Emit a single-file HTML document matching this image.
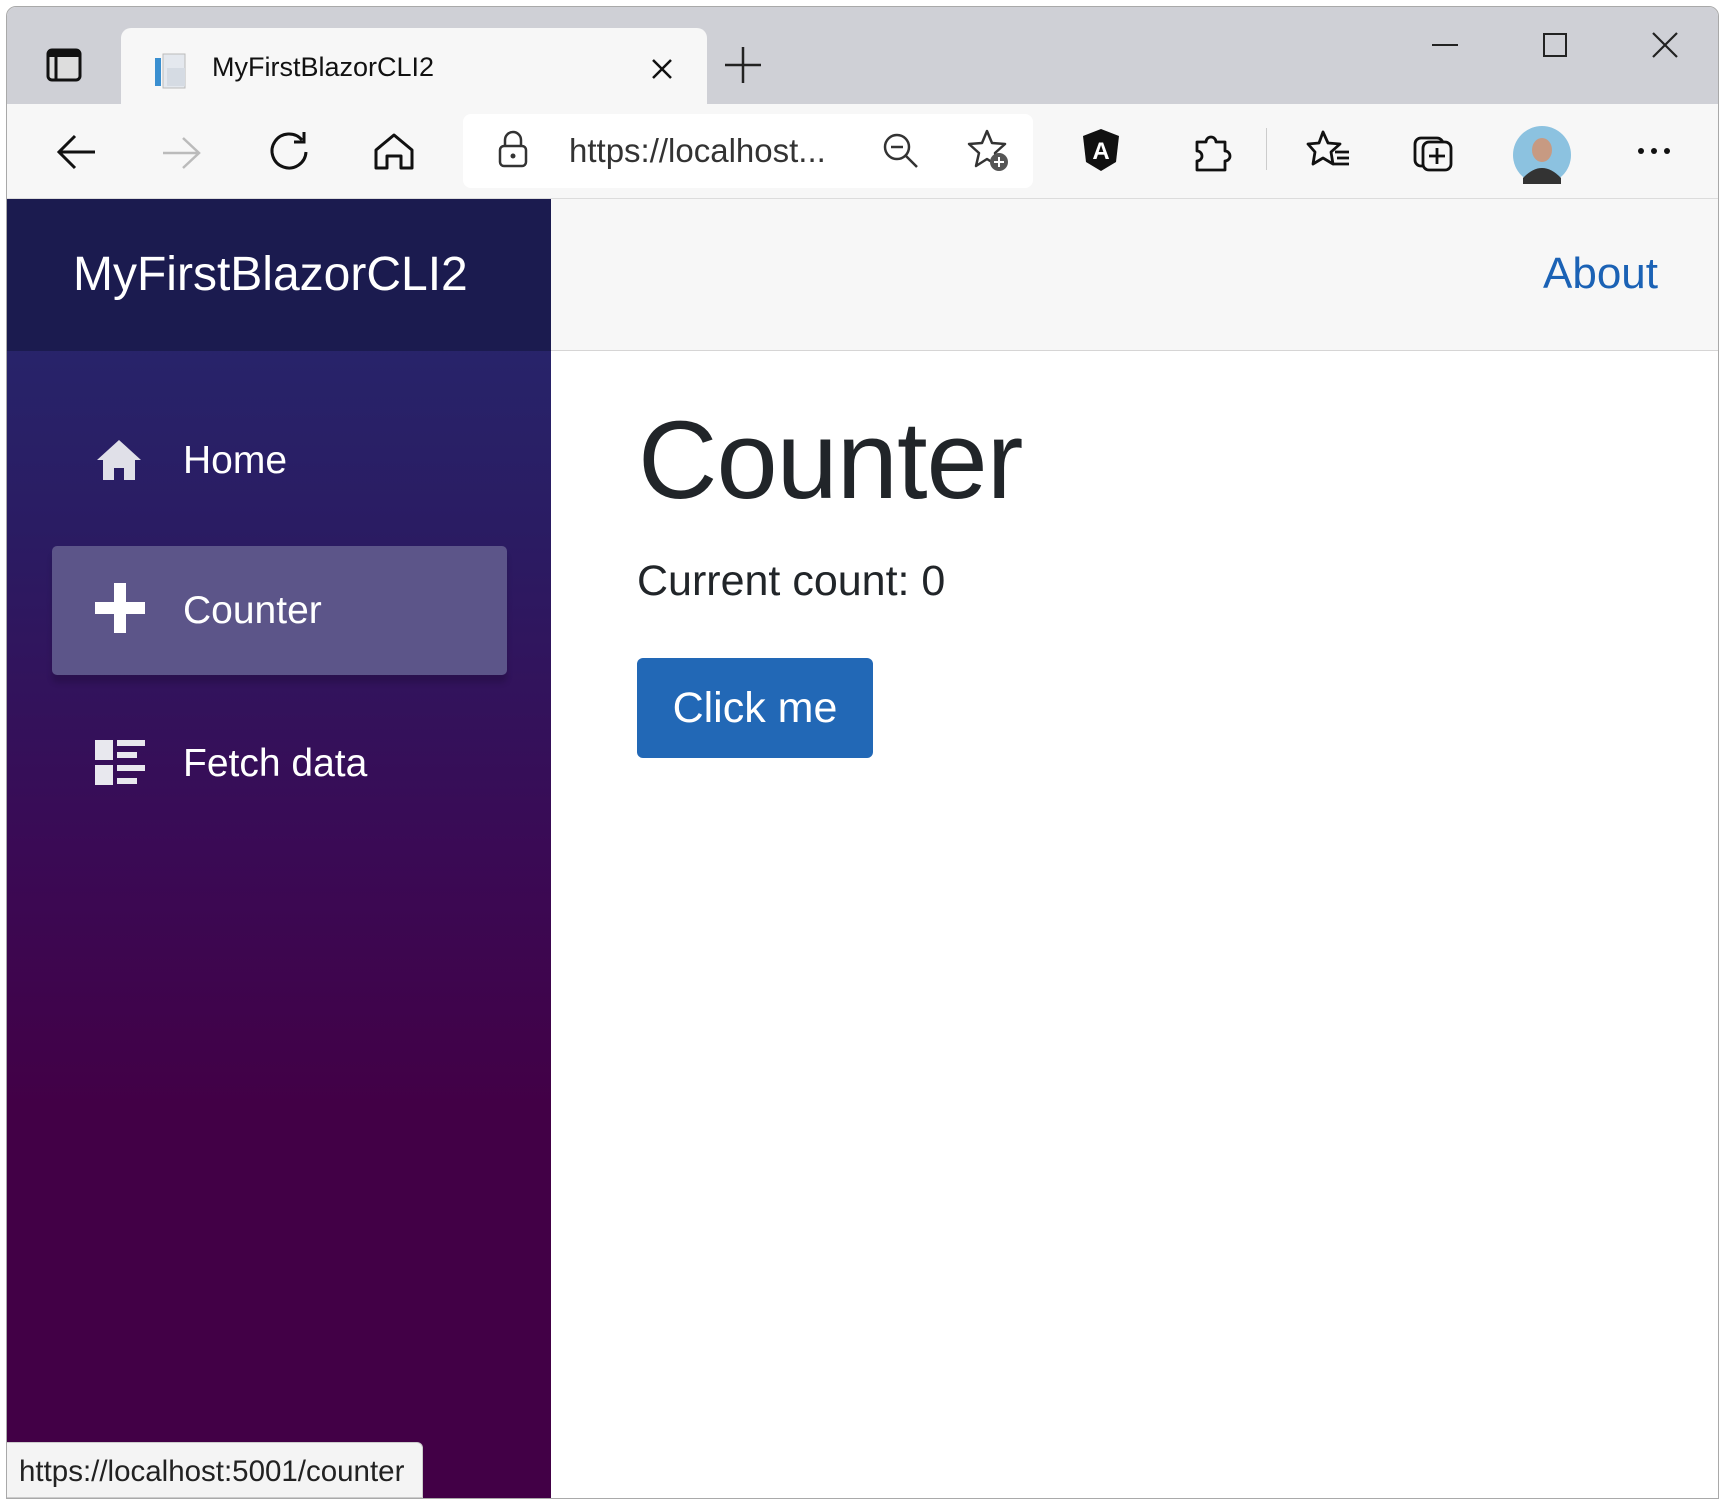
<!DOCTYPE html>
<html><head><meta charset="utf-8"><style>
*{margin:0;padding:0;box-sizing:border-box}
body{width:1725px;height:1505px;background:#fff;position:relative;overflow:hidden;font-family:"Liberation Sans",Arial,sans-serif}
.win{position:absolute;left:6px;top:6px;width:1713px;height:1493px;border:1px solid #a9a9a9;border-radius:10px 10px 0 0;overflow:hidden;background:#fff}
.tabbar{position:absolute;left:0;top:0;width:100%;height:97px;background:#cfd0d6}
.tab{position:absolute;left:114px;top:21px;width:586px;height:80px;background:#f7f7f7;border-radius:10px 10px 0 0}
.toolbar{position:absolute;left:0;top:97px;width:100%;height:95px;background:#f7f7f7;border-bottom:1px solid #dcdcdc}
.addr{position:absolute;left:456px;top:10px;width:570px;height:74px;background:#fff;border-radius:8px}
svg{position:absolute;overflow:visible}
.side{position:absolute;left:0;top:192px;width:544px;height:1301px;background:linear-gradient(180deg,#262a70 0%,#2a1c63 25%,#3a0a55 50%,#420046 70%,#420046 100%)}
.brandbar{position:absolute;left:0;top:0;width:544px;height:152px;background:#1b1b4f}
.brand{position:absolute;left:66px;top:48px;font-size:48px;color:#fff}
.nav{position:absolute;left:176px;font-size:39px;color:#fff}
.active{position:absolute;left:45px;top:347px;width:455px;height:129px;background:#5c5589;border-radius:5px;box-shadow:0 8px 6px rgba(0,0,0,.15)}
.top{position:absolute;left:544px;top:192px;width:1169px;height:152px;background:#f7f7f7;border-bottom:1px solid #d6d5d5}
.about{position:absolute;right:62px;top:50px;font-size:44px;color:#1b62b5}
h1{position:absolute;left:638px;top:397px;font-size:110px;font-weight:normal;color:#212529;letter-spacing:-1px}
.cc{position:absolute;left:637px;top:557px;font-size:43px;color:#212529}
.btn{position:absolute;left:637px;top:658px;width:236px;height:100px;background:#2268b6;border-radius:6px;color:#fff;font-size:43px;text-align:center;line-height:100px}
.status{position:absolute;left:0;top:1442px;width:416px;height:56px;background:#f4f4f4;border:1px solid #ccc;border-left:0;border-radius:0 6px 0 0;font-size:29.5px;color:#222;padding:12px 0 0 12px}
</style></head><body>
<div class="win">
 <div class="tabbar">
  <svg style="left:40px;top:42px" width="34" height="34"><rect x="1" y="1" width="32" height="30" rx="4" fill="#ddd" stroke="#111" stroke-width="3"/><rect x="1" y="1" width="32" height="7" fill="#111"/><line x1="9" y1="6" x2="9" y2="31" stroke="#111" stroke-width="3"/></svg>
  <div class="tab">
   <svg style="left:32px;top:24px" width="38" height="38"><rect x="2" y="6" width="6" height="28" fill="#3a8fd0"/><rect x="10" y="2" width="22" height="34" fill="#e4e8ee" stroke="#bbb"/><rect x="14" y="16" width="18" height="18" fill="#d5dbe3"/></svg>
   <div style="position:absolute;left:91px;top:24px;font-size:27px;color:#111">MyFirstBlazorCLI2</div>
   <svg style="left:530px;top:30px" width="22" height="22"><path d="M2 2L20 20M20 2L2 20" stroke="#111" stroke-width="2.5"/></svg>
  </div>
  <svg style="left:718px;top:40px" width="36" height="36"><path d="M18 0V36M0 18H36" stroke="#222" stroke-width="2.5"/></svg>
  <svg style="left:1425px;top:36px" width="26" height="4"><path d="M0 2H26" stroke="#222" stroke-width="2"/></svg>
  <svg style="left:1536px;top:26px" width="24" height="24"><rect x="1" y="1" width="22" height="22" fill="none" stroke="#222" stroke-width="2"/></svg>
  <svg style="left:1645px;top:25px" width="26" height="26"><path d="M1 1L25 25M25 1L1 25" stroke="#222" stroke-width="2.2"/></svg>
 </div>
 <div class="toolbar">
  <svg style="left:50px;top:30px" width="40" height="36"><path d="M38 18H3M18 2L2 18L18 34" fill="none" stroke="#111" stroke-width="3"/></svg>
  <svg style="left:156px;top:32px" width="40" height="34"><path d="M0 17H36M20 2L36 17L20 32" fill="none" stroke="#bbb" stroke-width="2.5"/></svg>
  <svg style="left:261px;top:26px" width="42" height="42"><path d="M34 10A17 17 0 1 0 38 22" fill="none" stroke="#111" stroke-width="3"/><path d="M36 2V12H26" fill="none" stroke="#111" stroke-width="3"/></svg>
  <svg style="left:366px;top:28px" width="42" height="40"><path d="M3 18L21 3L39 18V36H28V24H14V36H3Z" fill="none" stroke="#111" stroke-width="3" stroke-linejoin="round"/></svg>
  <div class="addr">
   <svg style="left:35px;top:18px" width="30" height="36"><path d="M7 14V8A8 8 0 0 1 23 8V14" fill="none" stroke="#333" stroke-width="2.5"/><rect x="2" y="14" width="26" height="20" rx="4" fill="none" stroke="#333" stroke-width="2.5"/><circle cx="15" cy="24" r="2.5" fill="#333"/></svg>
   <div style="position:absolute;left:106px;top:18px;font-size:33px;color:#333">https://localhost...</div>
   <svg style="left:420px;top:19px" width="36" height="36"><circle cx="14" cy="14" r="12" fill="none" stroke="#333" stroke-width="2.5"/><path d="M23 23L34 34M8 14H20" stroke="#333" stroke-width="2.5"/></svg>
   <svg style="left:504px;top:15px" width="44" height="44"><path d="M20 2L25 14L38 15L28 24L31 37L20 30L9 37L12 24L2 15L15 14Z" fill="none" stroke="#333" stroke-width="2.5" stroke-linejoin="round"/><circle cx="32" cy="33" r="9" fill="#555"/><path d="M32 28V38M27 33H37" stroke="#fff" stroke-width="2"/></svg>
  </div>
  <svg style="left:1074px;top:24px" width="40" height="44"><path d="M20 1L38 8L35 34L20 43L5 34L2 8Z" fill="#111"/><text x="20" y="31" font-size="24" font-weight="bold" fill="#fff" text-anchor="middle" font-family="Liberation Sans">A</text></svg>
  <svg style="left:1186px;top:28px" width="38" height="40"><path d="M4 10H13A5 5 0 0 1 23 10H32V19A5 5 0 0 1 32 29V38H4V29A5 5 0 0 0 4 19Z" fill="none" stroke="#111" stroke-width="2.8" stroke-linejoin="round"/></svg>
  <div style="position:absolute;left:1259px;top:24px;width:1px;height:42px;background:#ccc"></div>
  <svg style="left:1300px;top:26px" width="44" height="40"><path d="M16 2L21 13L33 14L24 22L26 34L16 28L6 34L8 22L1 14L12 13Z" fill="none" stroke="#111" stroke-width="2.8" stroke-linejoin="round"/><path d="M28 22H42M30 28H42M26 34H42" stroke="#111" stroke-width="2.8"/></svg>
  <svg style="left:1406px;top:26px" width="42" height="42"><rect x="2" y="8" width="28" height="28" rx="6" fill="none" stroke="#111" stroke-width="2.8"/><rect x="10" y="12" width="28" height="28" rx="6" fill="#f7f7f7" stroke="#111" stroke-width="2.8"/><path d="M24 18V34M16 26H32" stroke="#111" stroke-width="2.8"/></svg>
  <svg style="left:1506px;top:22px" width="58" height="58"><circle cx="29" cy="29" r="29" fill="#8cc2e0"/><ellipse cx="29" cy="24" rx="10" ry="12" fill="#c79a82"/><path d="M10 52Q29 32 48 52L48 58H10Z" fill="#333"/></svg>
  <svg style="left:1630px;top:43px" width="34" height="8"><circle cx="4" cy="4" r="3" fill="#111"/><circle cx="17" cy="4" r="3" fill="#111"/><circle cx="30" cy="4" r="3" fill="#111"/></svg>
 </div>
 <div class="side">
  <div class="brandbar"><div class="brand">MyFirstBlazorCLI2</div></div>
  <svg style="left:88px;top:239px" width="48" height="44"><path d="M24 2L46 22H40V42H29V30H19V42H8V22H2Z" fill="#e0e0e8"/></svg>
  <div class="nav" style="top:240px">Home</div>
  <div class="active"></div>
  <svg style="left:88px;top:384px" width="50" height="50"><path d="M19 0H31V19H50V31H31V50H19V31H0V19H19Z" fill="#fff"/></svg>
  <div class="nav" style="top:390px">Counter</div>
  <svg style="left:88px;top:541px" width="50" height="46"><rect x="0" y="0" width="18" height="20" fill="#e8e8ee"/><rect x="0" y="25" width="18" height="20" fill="#e8e8ee"/><rect x="22" y="0" width="28" height="6" fill="#e8e8ee"/><rect x="22" y="12" width="20" height="6" fill="#e8e8ee"/><rect x="22" y="25" width="28" height="6" fill="#e8e8ee"/><rect x="22" y="38" width="20" height="6" fill="#e8e8ee"/></svg>
  <div class="nav" style="top:543px">Fetch data</div>
 </div>
 <div class="top"><div class="about">About</div></div>
</div>
<h1>Counter</h1>
<div class="cc">Current count: 0</div>
<div class="btn">Click me</div>
<div class="status" style="left:7px">https://localhost:5001/counter</div>
</body></html>
